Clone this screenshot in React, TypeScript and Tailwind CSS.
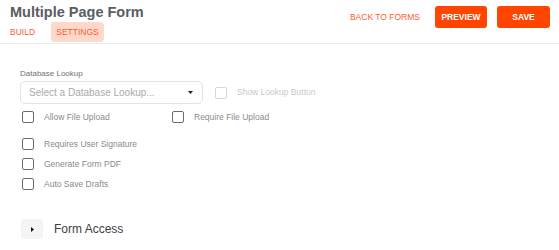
const font = { fontFamily: '"Liberation Sans", Arial, sans-serif' };

function Check({ label, disabled }: { label: string; disabled?: boolean }) {
  return (
    <label className="flex items-center gap-[10px] h-[12px]">
      <span
        className={
          "w-[12px] h-[12px] rounded-[2px] border-[1.5px] " +
          (disabled ? "border-[#d6d6d6]" : "border-[#6b6b6b]")
        }
      />
      <span className={"text-[8.5px] " + (disabled ? "text-[#c8c8c8]" : "text-[#8a8a8a]")}>{label}</span>
    </label>
  );
}

export default function App() {
  return (
    <div className="w-[559px] h-[250px] bg-white overflow-hidden" style={font}>
      <header className="flex justify-between border-b border-[#ececec] h-[44px]">
        <div className="pl-[10px] pt-[4px]">
          <h1 className="text-[14.5px] font-bold text-[#5a5d61] leading-[17px]">Multiple Page Form</h1>
          <nav className="flex items-center mt-[1px]">
            <button className="text-[8.5px] text-[#ff5a2c] pl-0 pr-[16px] h-[20px]">BUILD</button>
            <button className="text-[8.5px] text-[#ff5a2c] bg-[#ffd8cc] rounded-[4px] h-[20px] w-[53px]">SETTINGS</button>
          </nav>
        </div>
        <div className="flex items-start pt-[6px] pr-[9px] gap-[10px]">
          <button className="text-[8.5px] text-[#ff5a2c] h-[22px] mr-[5px]">BACK TO FORMS</button>
          <button className="text-[8.5px] font-bold text-white bg-[#ff4500] rounded-[3px] h-[22px] w-[52px]">PREVIEW</button>
          <button className="text-[8.5px] font-bold text-white bg-[#ff4500] rounded-[3px] h-[22px] w-[53px]">SAVE</button>
        </div>
      </header>

      <main className="pl-[20px] pt-[25px]">
        <div className="text-[8px] text-[#707070] leading-[10px]">Database Lookup</div>
        <div className="flex items-center mt-[2px]">
          <div className="w-[183px] h-[23px] border border-[#e2e2e2] rounded-[5px] flex items-center justify-between pl-[8px] pr-[9px]">
            <span className="text-[10px] text-[#a9a9a9]">Select a Database Lookup...</span>
            <svg width="5" height="3" viewBox="0 0 5 3"><path d="M0 0h5L2.5 3z" fill="#222" /></svg>
          </div>
          <div className="ml-[12px]">
            <Check label="Show Lookup Button" disabled />
          </div>
        </div>

        <div className="pl-[2px] mt-[7px] flex flex-col gap-[8px]">
          <div className="flex">
            <div className="w-[150px]"><Check label="Allow File Upload" /></div>
            <Check label="Require File Upload" />
          </div>
          <div className="flex flex-col gap-[8px] mt-[7px]">
            <Check label="Requires User Signature" />
            <Check label="Generate Form PDF" />
            <Check label="Auto Save Drafts" />
          </div>
        </div>

        <div className="flex items-center mt-[29px] pl-[1px]">
          <button className="w-[22px] h-[20px] bg-[#f3f4f6] rounded-[3px] flex items-center justify-center">
            <svg width="3" height="5" viewBox="0 0 3 5"><path d="M0 0l3 2.5L0 5z" fill="#111" /></svg>
          </button>
          <span className="ml-[11px] text-[12px] text-[#3c4043]">Form Access</span>
        </div>
      </main>
    </div>
  );
}
